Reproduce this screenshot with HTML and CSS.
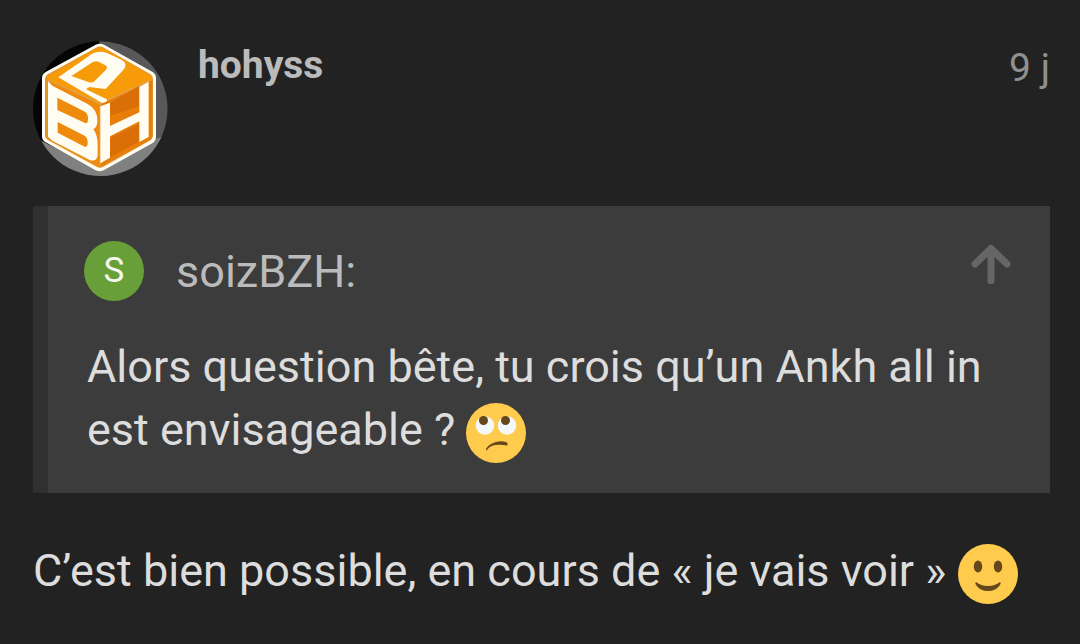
FILE: index.html
```html
<!DOCTYPE html>
<html lang="fr">
<head>
    <meta charset="UTF-8">
    <meta name="viewport" content="width=device-width, initial-scale=1.0">
    <title>Discussion</title>
    <link rel="stylesheet" href="styles.css">
</head>
<body>
    <article class="post">
        <header class="post-header">
            <svg class="avatar" viewBox="30 33 405 405" role="img" aria-label="Avatar">
                <defs>
                    <clipPath id="round"><circle cx="232" cy="236" r="202"/></clipPath>
                </defs>
                <g clip-path="url(#round)">
                    <rect x="30" y="33" width="405" height="405" fill="#050505"/>
                    <path d="M229 30H440V440H229z" fill="#58585a"/>
                    <path d="M30 320L58 334L229 420L405 325L440 310V440H30z" fill="#808080"/>
                    <path d="M218 44Q230 38 243 44L389 126Q399 132 399 144V320Q399 332 389 339L242 421Q230 427 218 421L68 337Q57 331 57 319V145Q57 132 68 126z" fill="#fffdf2"/>
                    <path d="M222 52Q231 47 240 52L380 131Q390 137 390 148V314Q390 326 380 332L240 411Q231 416 222 411L76 331Q66 325 66 314V149Q66 138 76 132z" fill="#e3942b"/>
                    <path d="M222 54Q231 50 240 54L384 138Q389 146 380 151L230 222L76 149Q70 143 76 138z" fill="#f79b08"/>
                    <path d="M74 151L230 226V412L80 328Q74 324 74 316z" fill="#ee8b0c"/>
                    <path d="M230 226L388 150V318Q388 326 380 330L230 412z" fill="#e87d0a"/>
                    <path d="M262 218L349 168V229L262 257zM262 324L349 281V334L262 382z" fill="#d96f06"/>
                    <path d="M74 150L230 220L388 148M231 222V414" fill="none" stroke="#e2a45a" stroke-width="3"/>
                    <!-- top face -->
                    <path fill-rule="evenodd" d="M106 142L198 78Q222 59 252 69L292 88Q318 101 300 121L248 177L199 171L189 178L250 207Q256 211 247 216L237 219z M145 138L205 99Q217 91 228 96L247 106Q256 111 249 119L215 153Q208 159 198 157z" fill="#fffdf2"/>
                    <!-- left face -->
                    <path fill-rule="evenodd" d="M75 153Q77 157 88 167L194 222Q225 239 223 274Q223 293 211 298Q224 314 224 346V374Q222 397 200 390L88 332L75 320z M103 203V240L188 280Q196 280 195 264Q195 252 186 245z M104 276V308L185 350Q195 352 194 337Q194 323 185 317z" fill="#fffdf2"/>
                    <!-- right face -->
                    <path d="M232 229L261 218V288L349 247V170L377 155V321L349 336V274L261 319V383L232 400z" fill="#fffdf2"/>
                </g>
            </svg>
            <a class="username" href="#">hohyss</a>
            <time class="date">9 j</time>
        </header>

        <blockquote class="quote">
            <div class="quote-header">
                <span class="letter-avatar">S</span>
                <span class="quote-author">soizBZH:</span>
                <button class="go-up" type="button" aria-label="Aller au message cité">
                    <svg viewBox="0 0 40 40">
                        <path d="M20 37V5M4 20L20 4.500L36 20"/>
                    </svg>
                </button>
            </div>
            <p class="quote-text">Alors question bête, tu crois qu’un Ankh all in est envisageable ? <svg class="emoji" viewBox="0 0 60 60" role="img" aria-label="Yeux levés au ciel">
                    <circle cx="30" cy="30" r="30" fill="#ffcb4c"/>
                    <circle cx="19" cy="22.500" r="9.300" fill="#f5f8fa"/>
                    <circle cx="41" cy="22.500" r="9.300" fill="#f5f8fa"/>
                    <circle cx="17.500" cy="17.500" r="4.500" fill="#65471b"/>
                    <circle cx="39.500" cy="17.500" r="4.500" fill="#65471b"/>
                    <path d="M21 47Q25 40 41 42.500Q42.500 41 41 39.500Q33 36.500 25 41Q20 44 20 47Q20 48 21 47z" fill="#65471b"/>
                </svg></p>
        </blockquote>

        <p class="post-text">C’est bien possible, en cours de « je vais voir » <svg class="emoji" viewBox="0 0 60 60" role="img" aria-label="Sourire">
                <circle cx="30" cy="30" r="30" fill="#ffcb4c"/>
                <ellipse cx="20" cy="22.500" rx="4.200" ry="5.900" fill="#65471b"/>
                <ellipse cx="40" cy="22.500" rx="4.200" ry="5.900" fill="#65471b"/>
                <path d="M18 38Q16.500 39 18 41Q22 47 30 47Q38 47 42 41Q43.500 39 42 38Q37 42 30 42Q23 42 18 38z" fill="#65471b"/>
            </svg></p>
    </article>
</body>
</html>
```
FILE: styles.css
```css
body {
    margin: 0;
    background-color: #222222;
    color: #dddddd;
    font-family: Roboto, sans-serif;
    font-size: 45px;
    line-height: 63px;
}
.post {
    padding: 41px 30px 30px 33px;
}
.post-header {
    display: flex;
    align-items: flex-start;
    margin-bottom: 30px;
    font-size: 39px;
    line-height: 48px;
}
.avatar {
    flex: none;
    width: 135px;
    height: 135px;
    margin-right: 30px;
}
.username {
    color: #bbbbbb;
    font-weight: bold;
    text-decoration: none;
}
.date {
    margin-left: auto;
    padding-top: 3px;
    color: #909090;
}
.quote {
    margin: 0 0 46px;
    padding: 35px 36px 30px;
    border-left: 15px solid #303030;
    background-color: #3c3c3c;
}
.quote-header {
    display: flex;
    align-items: center;
    height: 60px;
    margin-bottom: 34px;
    color: #bbbbbb;
}
.letter-avatar {
    width: 60px;
    margin-right: 32px;
    border-radius: 50%;
    background-color: #689f38;
    color: #f4f8ee;
    font-size: 35px;
    line-height: 60px;
    text-align: center;
}
.go-up {
    align-self: flex-start;
    margin-left: auto;
    padding: 3px;
    border: none;
    background: transparent;
    cursor: pointer;
}
.go-up svg {
    display: block;
    width: 40px;
    height: 40px;
    fill: none;
    stroke: #666666;
    stroke-width: 7;
    stroke-linecap: round;
    stroke-linejoin: round;
}
.quote-text, .post-text {
    margin: 0;
}
.quote-text {
    padding-left: 3px;
}
.emoji {
    width: 60px;
    height: 60px;
    vertical-align: middle;
}
```
